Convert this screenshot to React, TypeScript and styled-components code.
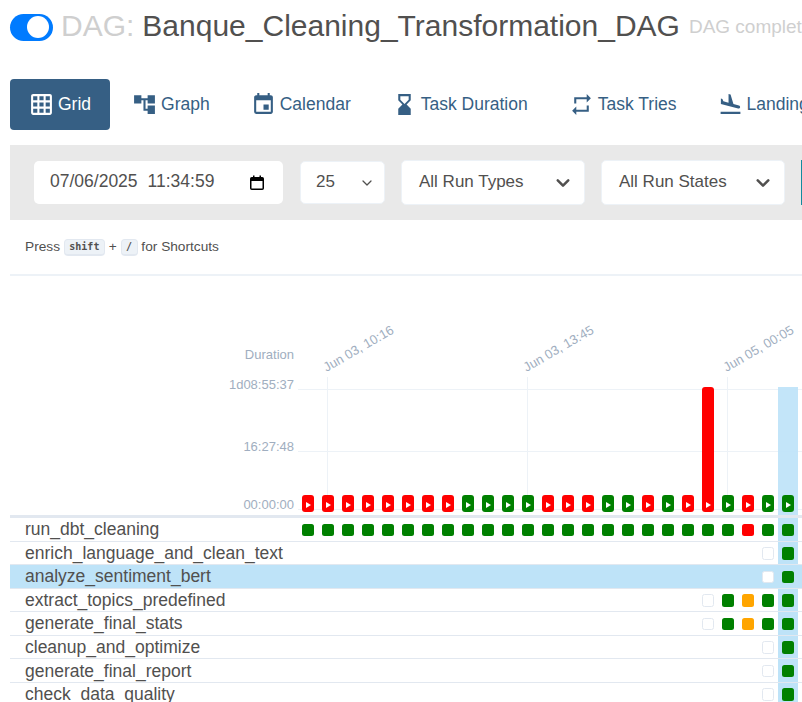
import React from "react";
import styled, { createGlobalStyle } from "styled-components";
import {
  MdGridOn,
  MdAccountTree,
  MdEvent,
  MdHourglassBottom,
  MdRepeat,
  MdFlightLand,
} from "react-icons/md";

const GlobalStyle = createGlobalStyle`
  html, body {
    margin: 0;
    padding: 0;
    background: #fff;
    overflow: hidden;
  }
  body {
    font-family: "Liberation Sans", Arial, sans-serif;
    color: #51504f;
  }
  * { box-sizing: border-box; }
`;

const Page = styled.div`
  width: 802px;
  height: 702px;
  overflow: hidden;
  padding: 10px 0 0 10px;
`;

const Inner = styled.div`
  width: 1100px;
`;

const Header = styled.div`
  display: flex;
  align-items: center;
  height: 34px;
  white-space: nowrap;
`;

const Toggle = styled.span`
  display: flex;
  align-items: center;
  justify-content: flex-end;
  width: 43px;
  height: 27px;
  padding-right: 4px;
  border-radius: 14px;
  background: #007bff;
  margin-right: 8px;
`;

const Knob = styled.span`
  width: 22px;
  height: 22px;
  border-radius: 50%;
  background: #fff;
`;

const DagLabel = styled.span`
  font-size: 30px;
  color: #cfcfcf;
  margin: 0 8px 2px 0;
`;

const DagName = styled.span`
  font-size: 30px;
  color: #51504f;
  margin: 0 9px 2px 0;
`;

const DagDescription = styled.span`
  font-size: 19px;
  color: #cfcfcf;
`;

const Tabs = styled.nav`
  display: flex;
  gap: 3px;
  margin-top: 35px;
  white-space: nowrap;
`;

const Tab = styled.a<{ $active?: boolean }>`
  display: flex;
  align-items: center;
  gap: 4px;
  height: 51px;
  padding: 0 19px;
  border-radius: 4px;
  font-size: 17.5px;
  color: ${(p) => (p.$active ? "#fff" : "#365f84")};
  background: ${(p) => (p.$active ? "#365f84" : "transparent")};
  svg {
    width: 25px;
    height: 25px;
  }
`;

const FilterBar = styled.div`
  display: flex;
  align-items: center;
  gap: 16px;
  width: 792px;
  height: 75px;
  margin-top: 15px;
  padding-left: 24px;
  background: #e9e9e9;
  overflow: hidden;
`;

const DateBox = styled.div`
  display: flex;
  align-items: center;
  justify-content: space-between;
  flex-shrink: 0;
  width: 249px;
  height: 43px;
  margin-right: 1px;
  padding: 0 19px 0 16px;
  border-radius: 5px;
  background: #fff;
  font-size: 17.5px;
  color: #51504f;
`;

const DateText = styled.span`
  display: flex;
  gap: 10px;
  margin-bottom: 2px;
`;

const SelectBox = styled.div<{ $width: number; $height: number; $padLeft: number; $padRight: number }>`
  display: flex;
  align-items: center;
  justify-content: space-between;
  flex-shrink: 0;
  width: ${(p) => p.$width}px;
  height: ${(p) => p.$height}px;
  padding: 0 ${(p) => p.$padRight}px 0 ${(p) => p.$padLeft}px;
  border: 1px solid #edf2f7;
  border-radius: 5px;
  background: #fff;
  font-size: 17px;
  color: #51504f;
`;

const SelectValue = styled.span`
  margin-bottom: 2px;
`;

const RunButton = styled.div`
  flex-shrink: 0;
  width: 60px;
  height: 45px;
  background: #138a9e;
`;

const Shortcuts = styled.div`
  width: 792px;
  height: 56px;
  padding: 18px 0 0 15px;
  border-bottom: 2px solid #edf2f7;
  font-size: 13.7px;
  line-height: 18px;
  color: #51504f;
`;

const Key = styled.kbd`
  display: inline-block;
  height: 17px;
  padding: 0 4.5px;
  border-radius: 4px;
  border: 1px solid #e2e8f0;
  border-bottom-width: 2px;
  background: #edf2f7;
  font-family: "DejaVu Sans Mono", monospace;
  font-size: 10px;
  font-weight: 600;
  line-height: 13px;
  vertical-align: 1px;
`;

const ChartSvg = styled.svg`
  display: block;
  font-family: "Liberation Sans", Arial, sans-serif;
`;

const RowList = styled.div`
  width: 792px;
  border-top: 3.5px solid #e2e8f0;
`;

const Row = styled.div<{ $selected?: boolean }>`
  display: flex;
  align-items: center;
  height: 23.55px;
  border-bottom: 1px solid #e2e8f0;
  background: ${(p) => (p.$selected ? "#bee3f8" : "transparent")};
`;

const RowLabel = styled.div`
  width: 288px;
  padding: 1px 0 0 15px;
  font-size: 17.5px;
  color: #51504f;
  white-space: nowrap;
`;

const Cells = styled.div`
  display: flex;
  height: 100%;
`;

const CellSlot = styled.div<{ $pinned?: boolean }>`
  display: flex;
  align-items: center;
  justify-content: center;
  width: 20px;
  height: 100%;
  padding-top: 1px;
  background: ${(p) => (p.$pinned ? "#bee3f8" : "transparent")};
`;

const Cell = styled.div<{ $state: string }>`
  width: 12px;
  height: 12.5px;
  border-radius: 2.5px;
  background: ${(p) =>
    p.$state === "g"
      ? "green"
      : p.$state === "r"
      ? "red"
      : p.$state === "o"
      ? "orange"
      : "#fff"};
  border: ${(p) => (p.$state === "e" ? "1px solid #e2e8f0" : "none")};
`;

const runs = "rrrrrrrrggggrrrggrgrrgrgg".split("");
const GRID = "#edf2f7";
const AXIS = "#a0aec0";

const dateTicks: [number, string][] = [
  [317.5, "Jun 03, 10:16"],
  [517.5, "Jun 03, 13:45"],
  [717.5, "Jun 05, 00:05"],
];

function DurationChart() {
  return (
    <ChartSvg width={792} height={239}>
      {[113.5, 175.5, 233.5].map((y) => (
        <line key={y} x1={288} x2={792} y1={y} y2={y} stroke={GRID} />
      ))}
      {dateTicks.map(([x]) => (
        <line key={x} x1={x} x2={x} y1={101} y2={234} stroke={GRID} />
      ))}
      <rect x={768} y={111} width={20} height={128} fill="#bee3f8" opacity={0.92} />
      <text x={284} y={83} textAnchor="end" fontSize={13} fill={AXIS}>Duration</text>
      <text x={284} y={113} textAnchor="end" fontSize={13} fill={AXIS}>1d08:55:37</text>
      <text x={284} y={175} textAnchor="end" fontSize={13} fill={AXIS}>16:27:48</text>
      <text x={284} y={233} textAnchor="end" fontSize={13} fill={AXIS}>00:00:00</text>
      {dateTicks.map(([x, t]) => (
        <text
          key={t}
          fontSize={13}
          fill={AXIS}
          transform={`translate(${x - 1} 96) rotate(-30)`}
        >
          {t}
        </text>
      ))}
      {runs.map((s, i) => {
        const x = 292 + i * 20;
        const y = i === 20 ? 111 : 219;
        return (
          <g key={i}>
            <rect
              x={x}
              y={y}
              width={12}
              height={236 - y}
              rx={3}
              fill={s === "g" ? "green" : "red"}
            />
            <path d={`M${x + 4} 226l5 3l-5 3z`} fill="#fff" />
          </g>
        );
      })}
    </ChartSvg>
  );
}

const empty = (n: number) => Array(n).fill("");

const tasks: { name: string; states: string[]; selected?: boolean }[] = [
  { name: "run_dbt_cleaning", states: "ggggggggggggggggggggggrgg".split("") },
  { name: "enrich_language_and_clean_text", states: [...empty(23), "e", "g"] },
  { name: "analyze_sentiment_bert", states: [...empty(23), "e", "g"], selected: true },
  { name: "extract_topics_predefined", states: [...empty(20), "e", "g", "o", "g", "g"] },
  { name: "generate_final_stats", states: [...empty(20), "e", "g", "o", "g", "g"] },
  { name: "cleanup_and_optimize", states: [...empty(23), "e", "g"] },
  { name: "generate_final_report", states: [...empty(23), "e", "g"] },
  { name: "check_data_quality", states: [...empty(23), "e", "g"] },
];

function Chevron({ small }: { small?: boolean }) {
  return (
    <svg width={small ? 12 : 18} height={small ? 12 : 18} viewBox="0 0 24 24" fill="none">
      <path
        d={small ? "M4 8l8 8l8-8" : "M5 8.5l7 7l7-7"}
        stroke="#51504f"
        strokeWidth={small ? 2.5 : 3.4}
        strokeLinecap="round"
        strokeLinejoin="round"
      />
    </svg>
  );
}

function CalendarIcon() {
  return (
    <svg width={14} height={15} viewBox="0 0 14 15">
      <rect x={0.75} y={2.75} width={12.5} height={11.5} rx={1} fill="none" stroke="#000" strokeWidth={1.5} />
      <rect x={1} y={3} width={12} height={3} fill="#000" />
      <rect x={3} y={0.5} width={1.5} height={3} fill="#000" />
      <rect x={9.5} y={0.5} width={1.5} height={3} fill="#000" />
    </svg>
  );
}

export default function App() {
  return (
    <Page>
      <GlobalStyle />
      <Inner>
        <Header>
          <Toggle>
            <Knob />
          </Toggle>
          <DagLabel>DAG:</DagLabel>
          <DagName>Banque_Cleaning_Transformation_DAG</DagName>
          <DagDescription>DAG complet de nettoyage</DagDescription>
        </Header>
        <Tabs>
          <Tab $active><MdGridOn />Grid</Tab>
          <Tab><MdAccountTree />Graph</Tab>
          <Tab><MdEvent />Calendar</Tab>
          <Tab><MdHourglassBottom />Task Duration</Tab>
          <Tab><MdRepeat />Task Tries</Tab>
          <Tab><MdFlightLand />Landing Times</Tab>
        </Tabs>
        <FilterBar>
          <DateBox>
            <DateText>
              <span>07/06/2025</span>
              <span>11:34:59</span>
            </DateText>
            <CalendarIcon />
          </DateBox>
          <SelectBox $width={85} $height={43} $padLeft={15} $padRight={11}>
            <SelectValue>25</SelectValue>
            <Chevron small />
          </SelectBox>
          <SelectBox $width={184} $height={45} $padLeft={17} $padRight={12}>
            <SelectValue>All Run Types</SelectValue>
            <Chevron />
          </SelectBox>
          <SelectBox $width={184} $height={45} $padLeft={17} $padRight={12}>
            <SelectValue>All Run States</SelectValue>
            <Chevron />
          </SelectBox>
          <RunButton />
        </FilterBar>
        <Shortcuts>
          Press <Key>shift</Key> + <Key>/</Key> for Shortcuts
        </Shortcuts>
        <DurationChart />
        <RowList>
          {tasks.map((t) => (
            <Row key={t.name} $selected={t.selected}>
              <RowLabel>{t.name}</RowLabel>
              <Cells>
                {t.states.map((s, i) => (
                  <CellSlot key={i} $pinned={i === 24}>
                    {s && <Cell $state={s} />}
                  </CellSlot>
                ))}
              </Cells>
            </Row>
          ))}
        </RowList>
      </Inner>
    </Page>
  );
}
